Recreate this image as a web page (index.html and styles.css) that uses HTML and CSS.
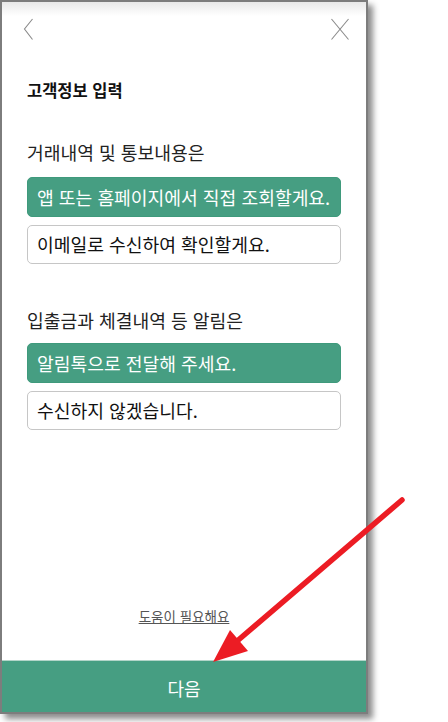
FILE: index.html
```html
<!DOCTYPE html>
<html lang="ko">
<head>
    <meta charset="UTF-8">
    <meta name="viewport" content="width=device-width, initial-scale=1.0">
    <link rel="stylesheet" href="styles.css">
    <title>고객정보 입력</title>
</head>
<body>
    <div class="phone">
        <div class="top-bar">
            <svg class="icon-back" width="12" height="24" viewBox="0 0 12 24">
                <polyline points="9.5,2 1.5,12 9.5,22.5" fill="none" stroke="#8a8a8a" stroke-width="1.1"/>
            </svg>
            <svg class="icon-close" width="20" height="24" viewBox="0 0 20 24">
                <line x1="1.5" y1="2" x2="18.5" y2="22.5" stroke="#8a8a8a" stroke-width="1.1"/>
                <line x1="18.5" y1="2" x2="1.5" y2="22.5" stroke="#8a8a8a" stroke-width="1.1"/>
            </svg>
        </div>

        <div class="content">
            <h1 class="title">고객정보 입력</h1>

            <p class="question">거래내역 및 통보내용은</p>
            <div class="options">
                <button class="option selected">앱 또는 홈페이지에서 직접 조회할게요.</button>
                <button class="option">이메일로 수신하여 확인할게요.</button>
            </div>

            <p class="question second">입출금과 체결내역 등 알림은</p>
            <div class="options">
                <button class="option selected">알림톡으로 전달해 주세요.</button>
                <button class="option">수신하지 않겠습니다.</button>
            </div>
        </div>

        <a class="help" href="#">도움이 필요해요</a>

        <button class="next-btn">다음</button>
    </div>

    <!-- red annotation arrow -->
    <svg class="arrow" width="448" height="722" viewBox="0 0 448 722">
        <line x1="402" y1="500" x2="236" y2="642" stroke="#ec1c24" stroke-width="5.5" stroke-linecap="round"/>
        <polygon points="213,662 230,630 248,651" fill="#ec1c24"/>
    </svg>
</body>
</html>
```

FILE: styles.css
```css
body {
    margin: 0;
    padding: 0;
    background: #fff;
    font-family: "Noto Sans CJK KR", "Noto Sans", sans-serif;
    width: 448px;
    height: 722px;
    position: relative;
    overflow: hidden;
}

.phone {
    width: 364px;
    height: 710px;
    border: 2px solid #7d7d7d;
    background: #fff;
    box-shadow: 5px 5px 6px rgba(0, 0, 0, 0.45);
    display: flex;
    flex-direction: column;
}

.top-bar {
    height: 48px;
    padding: 15px 16px 0 21px;
    box-sizing: border-box;
    display: flex;
    justify-content: space-between;
    align-items: flex-start;
    background: linear-gradient(#e9e9e9, #fff 14px);
}

.content {
    flex: 1;
    padding: 0 25px;
}

.title {
    margin: 30px 0 0;
    font-size: 16.5px;
    font-weight: bold;
    line-height: 20px;
    color: #111;
}

.question {
    margin: 40px 0 0;
    font-size: 18.2px;
    line-height: 24px;
    color: #222;
}

.question.second {
    margin-top: 44px;
}

.options {
    margin-top: 13px;
    display: flex;
    flex-direction: column;
    gap: 8px;
}

.question.second + .options {
    margin-top: 11px;
}

.option {
    height: 39.5px;
    padding: 0 9px;
    border: 1px solid #c6c6c6;
    border-radius: 5px;
    background: #fff;
    color: #111;
    font-family: inherit;
    font-size: 18.2px;
    text-align: left;
    cursor: pointer;
}

.option.selected {
    background: #469e82;
    border-color: #3f9a7c;
    color: #fff;
}

.help {
    align-self: center;
    margin-bottom: 34px;
    font-size: 13.5px;
    line-height: 20px;
    color: #555;
    text-decoration: underline;
}

.next-btn {
    height: 52px;
    padding: 3px 0 0;
    border: none;
    border-top: 1px solid #b3d5c9;
    background: #469e82;
    color: #fff;
    font-family: inherit;
    font-size: 18px;
    cursor: pointer;
}

.arrow {
    position: absolute;
    top: 0;
    left: 0;
    pointer-events: none;
}
```
